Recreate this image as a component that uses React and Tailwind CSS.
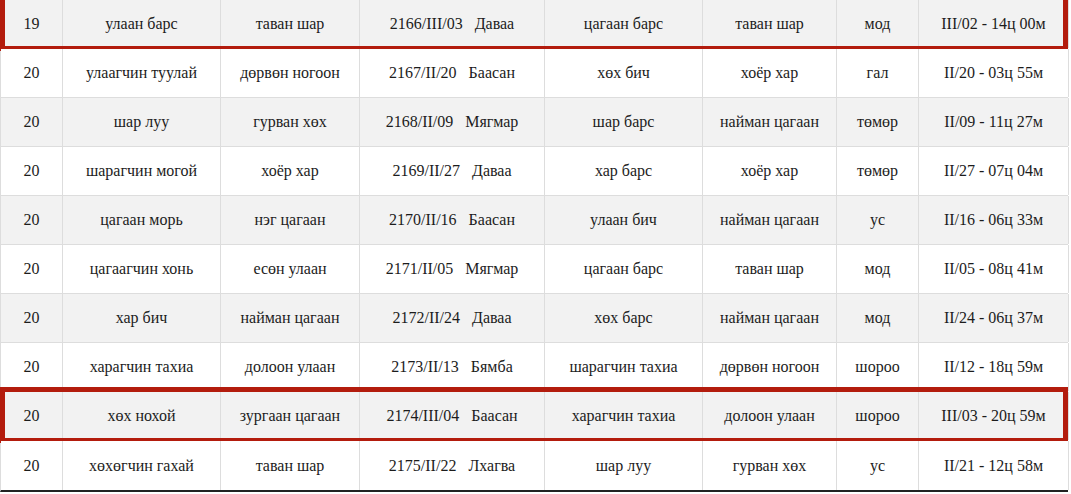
import React from 'react';

const COLS = ['w-[62px]', 'w-[158px]', 'w-[139px]', 'w-[185px]', 'w-[158px]', 'w-[134px]', 'w-[82px]', 'w-[150px]'];

const SP = '\u00a0\u00a0\u00a0';

const ROWS = [
  { hl: true, cells: ['19', 'улаан барс', 'таван шар', `2166/III/03${SP}Даваа`, 'цагаан барс', 'таван шар', 'мод', 'III/02 - 14ц 00м'] },
  { cells: ['20', 'улаагчин туулай', 'дөрвөн ногоон', `2167/II/20${SP}Баасан`, 'хөх бич', 'хоёр хар', 'гал', 'II/20 - 03ц 55м'] },
  { cells: ['20', 'шар луу', 'гурван хөх', `2168/II/09${SP}Мягмар`, 'шар барс', 'найман цагаан', 'төмөр', 'II/09 - 11ц 27м'] },
  { cells: ['20', 'шарагчин могой', 'хоёр хар', `2169/II/27${SP}Даваа`, 'хар барс', 'хоёр хар', 'төмөр', 'II/27 - 07ц 04м'] },
  { cells: ['20', 'цагаан морь', 'нэг цагаан', `2170/II/16${SP}Баасан`, 'улаан бич', 'найман цагаан', 'ус', 'II/16 - 06ц 33м'] },
  { cells: ['20', 'цагаагчин хонь', 'есөн улаан', `2171/II/05${SP}Мягмар`, 'цагаан барс', 'таван шар', 'мод', 'II/05 - 08ц 41м'] },
  { cells: ['20', 'хар бич', 'найман цагаан', `2172/II/24${SP}Даваа`, 'хөх барс', 'найман цагаан', 'мод', 'II/24 - 06ц 37м'] },
  { cells: ['20', 'харагчин тахиа', 'долоон улаан', `2173/II/13${SP}Бямба`, 'шарагчин тахиа', 'дөрвөн ногоон', 'шороо', 'II/12 - 18ц 59м'] },
  { hl: true, cells: ['20', 'хөх нохой', 'зургаан цагаан', `2174/III/04${SP}Баасан`, 'харагчин тахиа', 'долоон улаан', 'шороо', 'III/03 - 20ц 59м'] },
  { cells: ['20', 'хөхөгчин гахай', 'таван шар', `2175/II/22${SP}Лхагва`, 'шар луу', 'гурван хөх', 'ус', 'II/21 - 12ц 58м'] },
];

export default function App() {
  return (
    <div className="w-[1071px] h-[494px] bg-white overflow-hidden font-[family-name:'Liberation_Serif',serif] text-[16px] text-[#1c1c1c]">
      <div className="w-[1068px] border-l border-[#ddd] border-b-2 border-b-[#222]">
        {ROWS.map((row, i) => (
          <div
            key={i}
            className={`relative flex h-[49px] border-b border-[#ddd] last:border-b-0 ${i % 2 === 0 ? 'bg-[#f2f2f2]' : 'bg-white'}`}
          >
            {row.cells.map((c, j) => (
              <div
                key={j}
                className={`${COLS[j]} shrink-0 flex items-center justify-center border-r border-[#ddd] whitespace-nowrap`}
              >
                {c}
              </div>
            ))}
            {row.hl && (
              <div className="absolute left-[-1px] right-0 top-[-5px] bottom-[-3px] border-[5px] border-[#b31c0d] pointer-events-none" />
            )}
          </div>
        ))}
      </div>
    </div>
  );
}
